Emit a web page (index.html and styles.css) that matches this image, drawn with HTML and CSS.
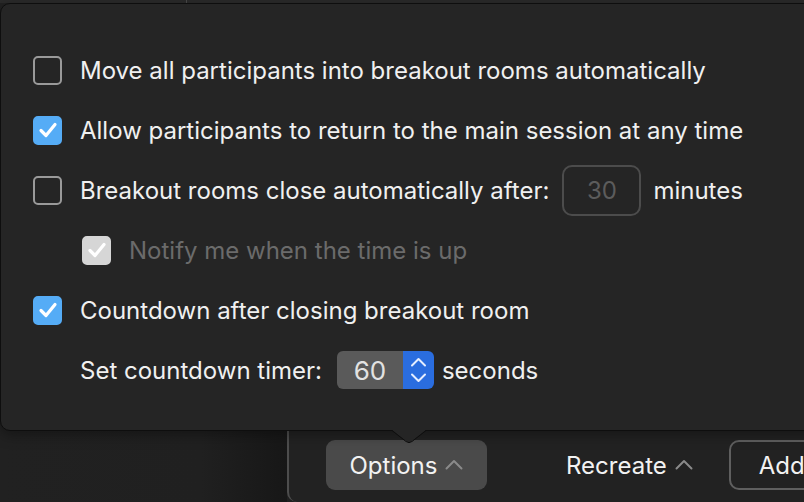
FILE: index.html
```html
<!DOCTYPE html>
<html>
<head>
<meta charset="utf-8">
<link rel="stylesheet" href="styles.css">
</head>
<body>
<div class="stage">
  <div class="topstrip"><span class="topstrip-left"></span><span class="topstrip-right"></span></div>
  <div class="backdrop">
    <div class="left-pane"></div>
    <div class="right-pane">
      <div class="toolbar">
        <button class="btn btn-options">Options <svg class="chev" width="18" height="11" viewBox="0 0 18 11"><path d="M1.5 9.5 L9 2 L16.5 9.5" fill="none" stroke="#8a8a8a" stroke-width="2" stroke-linecap="round" stroke-linejoin="round"/></svg></button>
        <button class="btn btn-plain">Recreate <svg class="chev" width="18" height="11" viewBox="0 0 18 11"><path d="M1.5 9.5 L9 2 L16.5 9.5" fill="none" stroke="#8a8a8a" stroke-width="2" stroke-linecap="round" stroke-linejoin="round"/></svg></button>
        <button class="btn btn-outline">Add</button>
      </div>
    </div>
  </div>

  <div class="popover">
    <div class="row">
      <span class="cb"></span>
      <span class="label">Move all participants into breakout rooms automatically</span>
    </div>
    <div class="row">
      <span class="cb cb-on"><svg width="20" height="18" viewBox="0 0 20 18"><path d="M3 9.5 L8 14.5 L17 3.5" fill="none" stroke="#fff" stroke-width="3.2" stroke-linecap="round" stroke-linejoin="round"/></svg></span>
      <span class="label">Allow participants to return to the main session at any time</span>
    </div>
    <div class="row">
      <span class="cb"></span>
      <span class="label">Breakout rooms close automatically after:</span>
      <span class="num-field">30</span>
      <span class="label">minutes</span>
    </div>
    <div class="row row-indent">
      <span class="cb cb-dim"><svg width="20" height="18" viewBox="0 0 20 18"><path d="M3 9.5 L8 14.5 L17 3.5" fill="none" stroke="#fff" stroke-width="3.2" stroke-linecap="round" stroke-linejoin="round"/></svg></span>
      <span class="label label-dim">Notify me when the time is up</span>
    </div>
    <div class="row">
      <span class="cb cb-on"><svg width="20" height="18" viewBox="0 0 20 18"><path d="M3 9.5 L8 14.5 L17 3.5" fill="none" stroke="#fff" stroke-width="3.2" stroke-linecap="round" stroke-linejoin="round"/></svg></span>
      <span class="label">Countdown after closing breakout room</span>
    </div>
    <div class="row row-sub">
      <span class="label">Set countdown timer:</span>
      <span class="stepper">
        <span class="stepper-value">60</span>
        <span class="stepper-arrows">
          <svg width="17" height="26" viewBox="0 0 17 26"><path d="M2 8.5 L8.5 2 L15 8.5 M2 17.5 L8.5 24 L15 17.5" fill="none" stroke="#e6eeff" stroke-width="2" stroke-linecap="round" stroke-linejoin="round"/></svg>
        </span>
      </span>
      <span class="label">seconds</span>
    </div>
    <svg class="caret" width="34" height="14" viewBox="0 0 34 14"><path d="M0 0 L14 11 Q17 13.4 20 11 L34 0 Z" fill="#252525"/><path d="M0 0.5 L14 11.5 Q17 13.9 20 11.5 L34 0.5" fill="none" stroke="#0e0e0e" stroke-width="1"/></svg>
  </div>
</div>
</body>
</html>
```

FILE: styles.css
```css
* { box-sizing: border-box; }

html, body {
  margin: 0;
  padding: 0;
}

body {
  background: #1f1f1f;
  font-family: Inter, "Helvetica Neue", Arial, sans-serif;
  color: #f0f0f0;
}

.stage {
  position: relative;
  width: 804px;
  height: 502px;
  overflow: hidden;
}

.topstrip {
  display: flex;
  height: 3px;
  background: #2a2a2a;
}
.topstrip-left {
  width: 187px;
  flex-shrink: 0;
  border-right: 1px solid #4a4a4a;
}
.topstrip-right { flex: 1; }

.backdrop {
  display: flex;
  height: 499px;
}

.left-pane {
  width: 287px;
  flex-shrink: 0;
  background: linear-gradient(to right, #212121 0%, #202020 70%, #171717 100%);
}

.right-pane {
  flex: 1;
  min-width: 0;
  overflow: hidden;
  background: #222222;
  border-left: 2px solid #4d4d4d;
  border-bottom-left-radius: 10px;
  display: flex;
  flex-direction: column;
  justify-content: flex-end;
}

.toolbar {
  display: flex;
  align-items: center;
  padding: 0 0 12px 37px;
  height: 62px;
}

.btn {
  font-family: inherit;
  font-size: 24px;
  color: #f2f2f2;
  border: none;
  background: none;
  display: flex;
  align-items: center;
  gap: 8px;
  height: 50px;
  padding: 0;
  flex-shrink: 0;
}
.chev { margin-top: -2px; }

.btn-options {
  width: 161px;
  justify-content: center;
  background: #4a4a4a;
  border-radius: 9px;
}
.btn-plain {
  margin-left: 79px;
}
.btn-outline {
  margin-left: 36px;
  width: 120px;
  border: 2px solid #5f5f5f;
  border-radius: 10px;
  padding-left: 28px;
}

.popover {
  position: absolute;
  left: 0;
  top: 3px;
  width: 840px;
  height: 428px;
  background: #252525;
  border: 1px solid #0e0e0e;
  border-radius: 10px;
  padding: 36px 0 0 32px;
  display: flex;
  flex-direction: column;
  box-shadow: 0 4px 14px rgba(0,0,0,0.35);
}

.row {
  display: flex;
  align-items: center;
  height: 60px;
}

.row-indent { padding-left: 49px; }
.row-sub { padding-left: 47px; }

.cb {
  width: 29px;
  height: 29px;
  border: 2px solid #9a9a9a;
  border-radius: 5px;
  flex-shrink: 0;
  display: flex;
  align-items: center;
  justify-content: center;
  margin-right: 18px;
}
.cb-on {
  background: #55acf6;
  border-color: #55acf6;
}
.cb-dim {
  background: #d6d6d6;
  border-color: #d6d6d6;
}

.label {
  font-size: 24px;
  white-space: nowrap;
}
.label-dim { color: #6b6b6b; }

.num-field {
  width: 79px;
  height: 51px;
  border: 2px solid #4c4c4c;
  border-radius: 10px;
  margin: 0 12px 0 13px;
  display: flex;
  align-items: center;
  justify-content: center;
  font-size: 24px;
  color: #5c5c5c;
}

.stepper {
  display: flex;
  height: 38px;
  margin: 0 8px 0 15px;
  border-radius: 6px;
  overflow: hidden;
}
.stepper-value {
  width: 66px;
  background: #5a5a5a;
  display: flex;
  align-items: center;
  justify-content: center;
  font-size: 26px;
  color: #e2e2e2;
}
.stepper-arrows {
  width: 31px;
  background: #2a6ddf;
  display: flex;
  align-items: center;
  justify-content: center;
}

.caret {
  position: absolute;
  left: 391px;
  top: 426px;
}
```
